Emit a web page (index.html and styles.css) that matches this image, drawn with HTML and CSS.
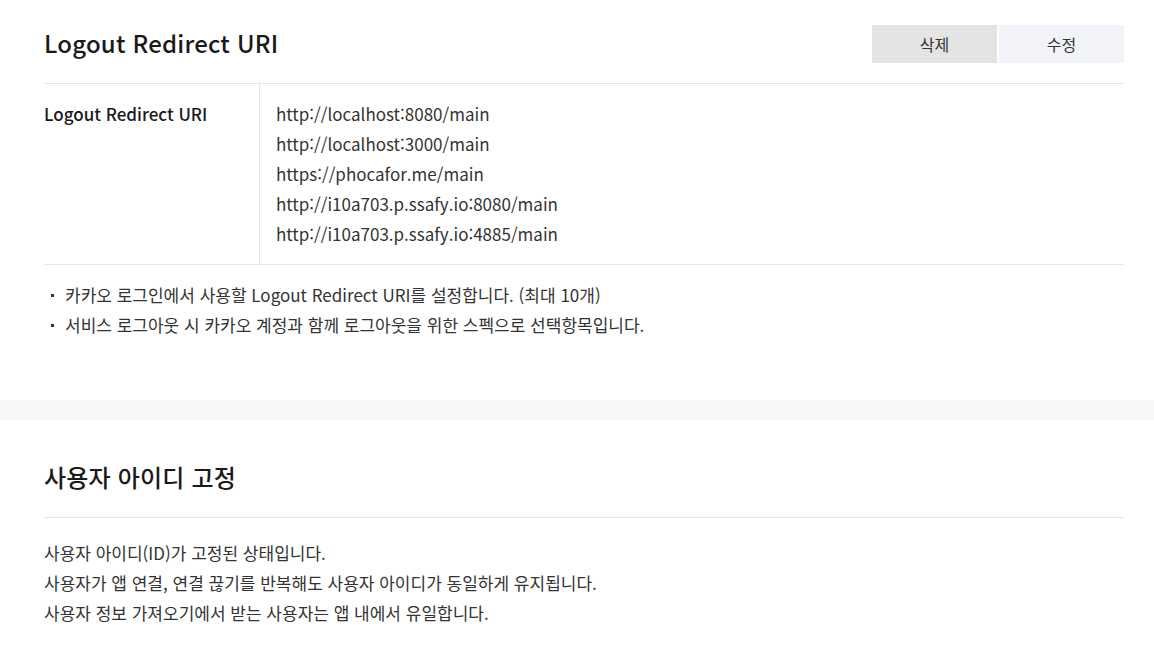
FILE: index.html
```html
<!DOCTYPE html>
<html lang="ko">
<head>
<meta charset="utf-8">
<link rel="stylesheet" href="styles.css">
</head>
<body>
<section class="panel">
  <div class="panel-head">
    <h2 class="panel-title">Logout Redirect URI</h2>
    <div class="btn-group">
      <button class="btn btn-delete">삭제</button>
      <button class="btn btn-edit">수정</button>
    </div>
  </div>
  <div class="info-row">
    <div class="info-label">Logout Redirect URI</div>
    <div class="info-value">
      <div>http://localhost:8080/main</div>
      <div>http://localhost:3000/main</div>
      <div>https://phocafor.me/main</div>
      <div>http://i10a703.p.ssafy.io:8080/main</div>
      <div>http://i10a703.p.ssafy.io:4885/main</div>
    </div>
  </div>
  <ul class="notes">
    <li>카카오 로그인에서 사용할 Logout Redirect URI를 설정합니다. (최대 10개)</li>
    <li>서비스 로그아웃 시 카카오 계정과 함께 로그아웃을 위한 스펙으로 선택항목입니다.</li>
  </ul>
</section>
<div class="divider-band"></div>
<section class="panel panel-second">
  <div class="panel-head">
    <h2 class="panel-title">사용자 아이디 고정</h2>
  </div>
  <div class="desc">
    <p>사용자 아이디(ID)가 고정된 상태입니다.</p>
    <p>사용자가 앱 연결, 연결 끊기를 반복해도 사용자 아이디가 동일하게 유지됩니다.</p>
    <p>사용자 정보 가져오기에서 받는 사용자는 앱 내에서 유일합니다.</p>
  </div>
</section>
</body>
</html>
```
FILE: styles.css
```css
* { box-sizing: border-box; }
html, body { margin: 0; padding: 0; background: #fff; }
body {
  font-family: "Noto Sans CJK KR", "Noto Sans", sans-serif;
  color: #333;
  font-size: 17px;
}
.panel {
  padding: 25px 30px 60px 44px;
}
.panel-second {
  padding-top: 39px;
  padding-bottom: 20px;
}
.panel-head {
  display: flex;
  justify-content: space-between;
  align-items: center;
  height: 59px;
  padding-bottom: 20px;
  border-bottom: 1px solid #e5e5e5;
}
.panel-title {
  margin: 0;
  padding-bottom: 4px;
  font-size: 24px;
  font-weight: 500;
  color: #1a1a1a;
  letter-spacing: 0.2px;
}
.btn-group {
  display: flex;
  gap: 2px;
}
.btn {
  width: 125px;
  height: 38px;
  border: 0;
  font-family: inherit;
  font-size: 16px;
  color: #333;
  padding: 0;
}
.btn-delete { background: #e4e4e4; }
.btn-edit { background: #f1f3f8; }
.info-row {
  display: flex;
  border-bottom: 1px solid #e5e5e5;
}
.info-label {
  width: 216px;
  padding-top: 15px;
  border-right: 1px solid #e5e5e5;
  font-weight: 500;
  color: #1a1a1a;
  line-height: 30px;
}
.info-value {
  padding: 15px 0 15px 16px;
  line-height: 30px;
}
.notes {
  list-style: none;
  margin: 15px 0 0;
  padding: 0;
  line-height: 30px;
}
.notes li {
  position: relative;
  padding-left: 21px;
}
.notes li::before {
  content: "";
  position: absolute;
  left: 7px;
  top: 14px;
  width: 3px;
  height: 3px;
  background: #333;
}
.divider-band {
  height: 20px;
  background: #f6f7f7;
}
.desc {
  padding-top: 20px;
  line-height: 30px;
}
.desc p { margin: 0; }
```
